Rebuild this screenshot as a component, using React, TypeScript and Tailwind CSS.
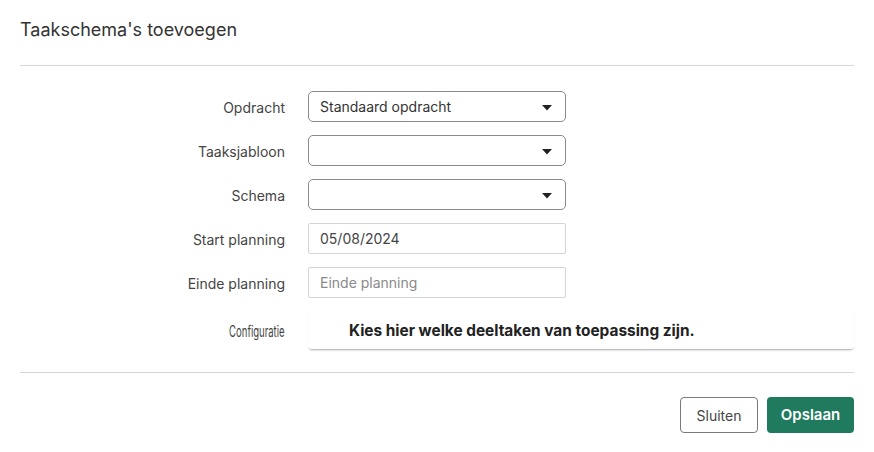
import React from "react";

function Caret() {
  return (
    <svg width="10" height="6" viewBox="0 0 10 6" className="absolute right-[13px] top-[13px]">
      <path d="M0 0 H10 L5 5.5 Z" fill="#222" />
    </svg>
  );
}

function SelectBox({ value }: { value?: string }) {
  return (
    <div className="relative h-[31px] w-[258px] rounded-[5px] border border-[#8a8a8a] bg-white px-[11px] text-[14px] leading-[29px] text-[#333]">
      {value}
      <Caret />
    </div>
  );
}

function TextBox({ value, placeholder }: { value?: string; placeholder?: string }) {
  return (
    <div className="h-[31px] w-[258px] rounded-[2px] border border-[#d4d4d4] bg-white px-[11px] text-[14px] leading-[29px]">
      {value ? <span className="text-[#444]">{value}</span> : <span className="text-[#8a8a8a]">{placeholder}</span>}
    </div>
  );
}

function Row({ label, children }: { label: string; children: React.ReactNode }) {
  return (
    <div className="flex items-center">
      <label className="w-[265px] pt-[2px] text-right text-[14px] text-[#444]">{label}</label>
      <div className="ml-[23px]">{children}</div>
    </div>
  );
}

export default function App() {
  return (
    <div className="h-[452px] w-[874px] bg-white px-5 font-[Inter,sans-serif]">
      <div className="flex h-[66px] items-center border-b border-[#d6d6d6] pb-[6px]">
        <h2 className="text-[18px] font-normal text-[#333]">Taakschema's toevoegen</h2>
      </div>

      <div className="flex flex-col gap-[13px] pt-[25px]">
        <Row label="Opdracht">
          <SelectBox value="Standaard opdracht" />
        </Row>
        <Row label="Taaksjabloon">
          <SelectBox />
        </Row>
        <Row label="Schema">
          <SelectBox />
        </Row>
        <Row label="Start planning">
          <TextBox value="05/08/2024" />
        </Row>
        <Row label="Einde planning">
          <TextBox placeholder="Einde planning" />
        </Row>
      </div>

      <div className="flex border-b border-[#d6d6d6] pb-[23px] pt-[13px]">
        <div className="w-[265px] pt-[9px] text-right text-[14px] text-[#444]">
          <span className="inline-block origin-right scale-x-[0.68] scale-y-[1.1]">Configuratie</span>
        </div>
        <div className="ml-[23px] h-[38px] flex-1 rounded-b-[4px] bg-white pl-[41px] pt-[7px] shadow-[0_2px_2px_-1px_rgba(0,0,0,0.35)]">
          <span className="inline-block text-[15.4px] font-bold text-[#222]">
            Kies hier welke deeltaken van toepassing zijn.
          </span>
        </div>
      </div>

      <div className="flex justify-end gap-[9px] pt-[24px]">
        <button className="h-[36px] w-[78px] rounded-[4px] border border-[#7a7a7a] bg-white text-[14px] text-[#444]">
          Sluiten
        </button>
        <button className="h-[36px] w-[87px] rounded-[4px] bg-[#1f7a5e] text-[15px] font-semibold text-white">
          Opslaan
        </button>
      </div>
    </div>
  );
}
